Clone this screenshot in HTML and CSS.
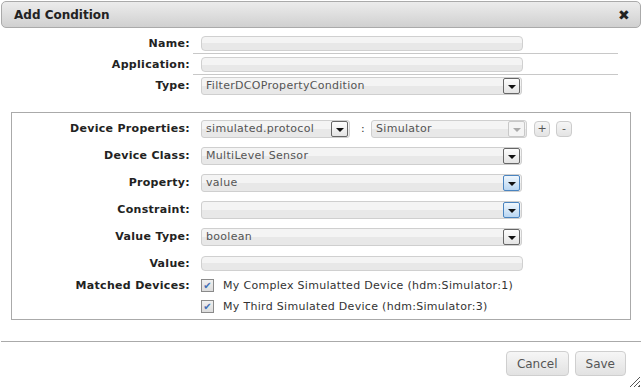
FILE: index.html
```html
<!DOCTYPE html>
<html lang="en">
<head>
    <meta charset="UTF-8">
    <title>Add Condition</title>
    <link rel="stylesheet" href="styles.css">
</head>
<body>
    <div class="dialog">
        <div class="titlebar">
            <span class="title">Add Condition</span>
            <span class="close">&#10006;</span>
        </div>

        <div class="head-form">
            <div class="row line">
                <label>Name:</label>
                <div class="cell"><div class="input wide"></div></div>
            </div>
            <div class="row line">
                <label>Application:</label>
                <div class="cell"><div class="input wide"></div></div>
            </div>
            <div class="row">
                <label>Type:</label>
                <div class="cell">
                    <div class="select wide"><span>FilterDCOPropertyCondition</span><i class="arrow"></i></div>
                </div>
            </div>
        </div>

        <div class="box">
            <div class="row">
                <label>Device Properties:</label>
                <div class="cell">
                    <div class="select small"><span>simulated.protocol</span><i class="arrow"></i></div>
                    <span class="colon">:</span>
                    <div class="select medium"><span>Simulator</span><i class="arrow off"></i></div>
                    <button class="mini">+</button>
                    <button class="mini">-</button>
                </div>
            </div>
            <div class="row">
                <label>Device Class:</label>
                <div class="cell"><div class="select wide"><span>MultiLevel Sensor</span><i class="arrow"></i></div></div>
            </div>
            <div class="row">
                <label>Property:</label>
                <div class="cell"><div class="select wide"><span>value</span><i class="arrow hot"></i></div></div>
            </div>
            <div class="row">
                <label>Constraint:</label>
                <div class="cell"><div class="select wide"><span></span><i class="arrow hot"></i></div></div>
            </div>
            <div class="row">
                <label>Value Type:</label>
                <div class="cell"><div class="select wide"><span>boolean</span><i class="arrow"></i></div></div>
            </div>
            <div class="row">
                <label>Value:</label>
                <div class="cell"><div class="input wide"></div></div>
            </div>
            <div class="row devices">
                <label>Matched Devices:</label>
                <div class="cell list">
                    <div class="check"><i class="box-tick">&#10004;</i>My Complex Simulatted Device (hdm:Simulator:1)</div>
                    <div class="check"><i class="box-tick">&#10004;</i>My Third Simulated Device (hdm:Simulator:3)</div>
                </div>
            </div>
        </div>

        <div class="footer">
            <button class="btn">Cancel</button>
            <button class="btn">Save</button>
            <span class="grip"></span>
        </div>
    </div>
</body>
</html>
```

FILE: styles.css
```css
* {
    margin: 0;
    padding: 0;
    box-sizing: border-box;
}
body {
    font-family: "DejaVu Sans", Verdana, sans-serif;
    font-size: 11px;
    letter-spacing: 0.3px;
    color: #333;
    background: #fff;
}
.dialog {
    width: 642px;
    height: 387px;
    position: relative;
}
.titlebar {
    height: 27px;
    margin: 1px 1px 0;
    border: 1px solid #aaa;
    border-radius: 5px;
    background: linear-gradient(#ececec, #d0d0d0);
    display: flex;
    align-items: center;
    justify-content: space-between;
    padding: 0 10px 0 12px;
}
.title {
    font-weight: bold;
    font-size: 12px;
    letter-spacing: 0;
    color: #222;
}
.close {
    font-size: 14px;
    color: #222;
}

/* form rows */
.row {
    display: flex;
    align-items: center;
}
.row label {
    width: 190px;
    text-align: right;
    font-weight: bold;
    color: #222;
    flex-shrink: 0;
}
.cell {
    margin-left: 3px;
    padding-left: 8px;
    display: flex;
    align-items: center;
}
.head-form {
    padding-top: 5px;
}
.head-form .row {
    height: 21px;
}
.head-form .row.line .cell {
    width: 425px;
    height: 21px;
    border-bottom: 1px solid #c8c8c8;
}

.input {
    height: 15px;
    border: 1px solid #d0d0d0;
    border-radius: 4px;
    background: linear-gradient(#f4f4f4 50%, #e8e8e8 50%);
}
.select {
    height: 18px;
    border: 1px solid #cfcfcf;
    border-radius: 3px;
    background: linear-gradient(#f4f4f4 50%, #e8e8e8 50%);
    display: flex;
    align-items: center;
    justify-content: space-between;
    color: #555;
    padding-left: 4px;
}
.wide { width: 321px; }
.input.wide { width: 322px; }
.small { width: 149px; }
.medium { width: 156px; }

.arrow {
    width: 17px;
    height: 16px;
    margin-right: 1px;
    border: 1px solid #666;
    border-radius: 2px;
    background: linear-gradient(#fdfdfd, #e4e4e4);
    position: relative;
}
.arrow::after {
    content: "";
    position: absolute;
    left: 4px;
    top: 6px;
    border-left: 4px solid transparent;
    border-right: 4px solid transparent;
    border-top: 4px solid #111;
}
.arrow.hot {
    border-color: #4a84c0;
    background: linear-gradient(#f0f7fd, #b9d6f2);
}
.arrow.off {
    border-color: #c8c8c8;
    background: #f4f4f4;
}
.arrow.off::after {
    border-top-color: #aaa;
}

.colon {
    margin: 0 6px 0 11px;
    color: #333;
}
.mini {
    width: 16px;
    height: 16px;
    border: 1px solid #ccc;
    border-radius: 4px;
    background: linear-gradient(#f6f6f6, #e4e4e4);
    font-family: inherit;
    font-size: 11px;
    color: #555;
    margin-left: 6px;
    line-height: 13px;
}
.mini:first-of-type {
    margin-left: 7px;
}

.box {
    margin: 16px 11px 0 11px;
    width: 620px;
    height: 208px;
    border: 1px solid #aaa;
    padding-top: 2px;
}
.box .row {
    height: 27px;
}
.box .row label {
    width: 178px;
}
.box .row.devices {
    height: auto;
    align-items: flex-start;
    margin-top: -2px;
}
.devices label {
    padding-top: 4px;
}
.list {
    flex-direction: column;
    align-items: flex-start;
}
.check {
    display: flex;
    align-items: center;
    height: 21px;
    color: #333;
}
.box-tick {
    width: 13px;
    height: 13px;
    border: 1px solid #8a8a8a;
    background: linear-gradient(#f0f0f0, #dcdcdc);
    color: #3f6fb5;
    font-size: 10px;
    line-height: 11px;
    text-align: center;
    font-style: normal;
    letter-spacing: 0;
    margin-right: 9px;
}

.footer {
    position: absolute;
    left: 1px;
    right: 1px;
    top: 340px;
    bottom: 0;
    border-top: 1px solid #aaa;
    display: flex;
    justify-content: flex-end;
    align-items: flex-start;
    padding: 9px 15px 0 0;
    gap: 6px;
}
.btn {
    height: 25px;
    border: 1px solid #cfcfcf;
    border-radius: 4px;
    background: linear-gradient(#f6f6f6, #e2e2e2);
    font-family: inherit;
    font-size: 12px;
    letter-spacing: 0;
    color: #555;
    padding: 0 10px;
}
.grip {
    position: absolute;
    right: 1px;
    bottom: 1px;
    width: 11px;
    height: 11px;
    background: repeating-linear-gradient(135deg, transparent 0 2px, #555 2px 3px);
    clip-path: polygon(100% 0, 100% 100%, 0 100%);
}
```
